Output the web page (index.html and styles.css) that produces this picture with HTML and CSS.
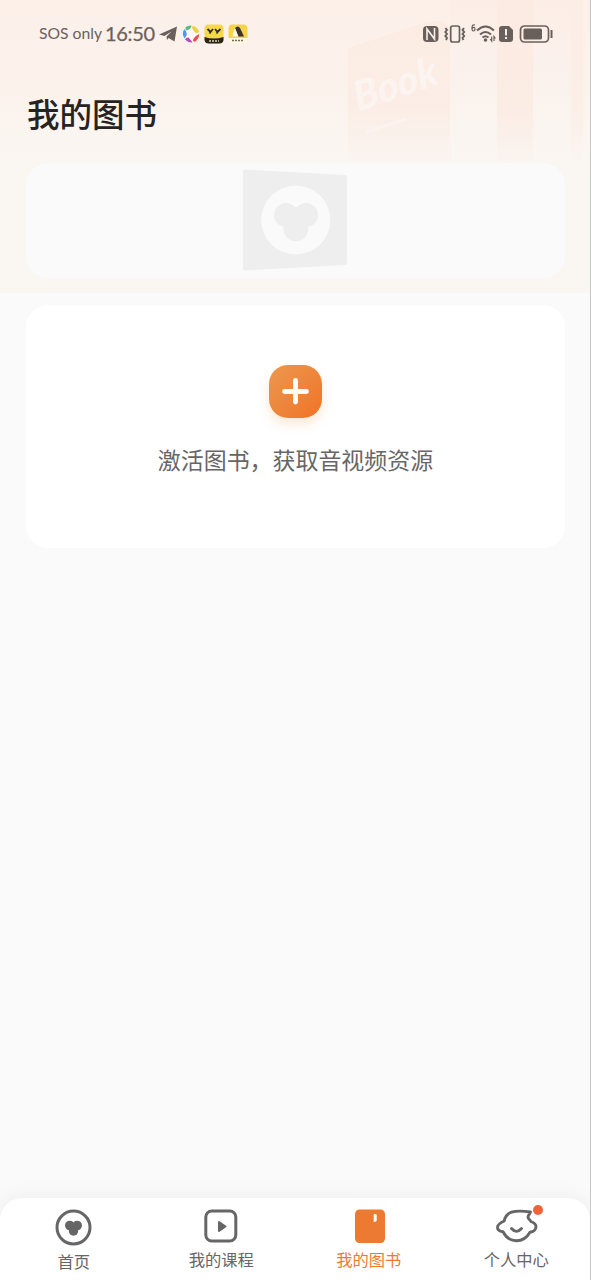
FILE: index.html
```html
<!DOCTYPE html>
<html lang="zh-CN">
<head>
<meta charset="utf-8">
<title>我的图书</title>
<link rel="stylesheet" href="styles.css">
</head>
<body>
<div class="screen">
  <svg class="hero" viewBox="0 0 591 293" aria-hidden="true">
    <defs>
      <linearGradient id="hero-bg" x1="0" y1="0" x2="0" y2="1">
        <stop offset="0" stop-color="#fcf0e9"/><stop offset=".3" stop-color="#fcf2ec"/>
        <stop offset=".55" stop-color="#faf6f2"/><stop offset="1" stop-color="#faf7f3"/>
      </linearGradient>
      <linearGradient id="book-fill" gradientUnits="userSpaceOnUse" x1="0" y1="0" x2="0" y2="162">
        <stop offset="0" stop-color="#fcebe2"/><stop offset=".65" stop-color="#fbece4"/><stop offset="1" stop-color="#faf4f0"/>
      </linearGradient>
      <linearGradient id="page-fill" gradientUnits="userSpaceOnUse" x1="0" y1="0" x2="0" y2="162">
        <stop offset="0" stop-color="#fceee6"/><stop offset=".4" stop-color="#fbf1ec"/><stop offset="1" stop-color="#faf6f2"/>
      </linearGradient>
    </defs>
    <rect width="591" height="293" fill="url(#hero-bg)"/>
    <path d="M348 48L420 24Q450 15 450 32V160H348Z" fill="url(#book-fill)" opacity=".85"/>
    <path d="M450 0H497V160H450Z" fill="url(#page-fill)"/>
    <path d="M497 0H533V160H497Z" fill="url(#book-fill)"/>
    <path d="M533 0H571V160H533Z" fill="url(#page-fill)"/>
    <path d="M571 0H583V160H571Z" fill="url(#book-fill)" opacity=".6"/>
    <path d="M366 132L406 119" stroke="#fcf3ee" stroke-width="3"/>
    <text class="hero-word" transform="translate(358 112) rotate(-19) skewX(-4)" textLength="87" lengthAdjust="spacingAndGlyphs">Book</text>
  </svg>

  <div class="status">
    <span class="carrier">SOS only</span>
    <span class="clock">16:50</span>
    <svg class="telegram" width="19" height="16" viewBox="0 0 19 16"><path d="M0 8.500L18 .500L15.500 15.500L9.500 12L8 14L7.500 10.500L12.500 5.500L5.500 10Z" fill="#69615d"/></svg>
    <svg class="pinwheel" width="18" height="18" viewBox="0 0 18 18"><circle cx="9" cy="9" r="8.500" fill="#fffaf7"/><path d="M3.500 2.200Q6 .2 9.500 .5Q9 4.500 4.500 5.500Q3 4 3.500 2.200Z" fill="#58bd77"/><path d="M10.500 .8Q15.500 2 17.300 7Q15 9 13 7.500L10.200 3.500Q10 2 10.500 .8Z" fill="#f0cf48"/><path d="M17.300 9Q17 14 13 16.700Q10.500 16.500 11 14.500Q13 10.500 17.300 9Z" fill="#e9504f"/><path d="M3 14.500Q4 12.200 6.500 12.500L10.500 17.300Q6 18 3 14.500Z" fill="#b74bc0"/><path d="M2.300 4Q5.200 6.500 4.800 10L2.500 13.500Q-.8 8.500 2.300 4Z" fill="#4d9af0"/></svg>
    <svg class="app" width="20" height="20" viewBox="0 0 20 20"><rect x=".5" y=".5" width="19" height="19" rx="4" fill="#f5d84b"/><path d="M.5 13Q10 16 19.500 13V16Q19 19.500 15 19.500H5Q1 19.500.5 16Z" fill="#29241c"/><path d="M3.500 5L6.500 8L9 5M6.500 8L5.500 9.500M11 5L13.500 8L16.500 5M13.500 8L12.500 9.500" fill="none" stroke="#322b20" stroke-width="1.800"/><path d="M5 17H15" stroke="#ddd3b2" stroke-width="1.500" stroke-dasharray="2 1"/></svg>
    <svg class="app" width="20" height="20" viewBox="0 0 20 20"><rect x=".5" y=".5" width="19" height="19" rx="4" fill="#fff8df"/><path d="M.5 14V4Q1 .5 4 .5H16Q19.500 1 19.500 4V14Z" fill="#f4d34d"/><path d="M7 4Q10 1 12 4L16 12.500H10Z" fill="#38332c"/><path d="M7 4L10.500 12.500H4.500L5.500 8Z" fill="#fffbe9"/><path d="M4 16.500H16" stroke="#6f6960" stroke-width="1.300" stroke-dasharray="2 1"/></svg>
    <svg class="system" width="132" height="22" viewBox="0 0 132 22" fill="none" stroke="#69605b">
      <rect x="1" y="3" width="15.500" height="16" rx="4" fill="#69605b" stroke="none"/>
      <path d="M5 17V6L12.500 16V5" stroke="#fbefe8" stroke-width="1.600"/>
      <path d="M23.500 5L25 7L23.300 9L25 11L23.300 13L25 15L24 17M42 5L40.500 7L42.200 9L40.500 11L42.200 13L40.500 15L41.500 17" stroke-width="1.900"/>
      <rect x="28.700" y="3" width="8.800" height="16" rx="2" stroke-width="1.700"/>
      <path d="M53 2Q50 1 50 5V6Q50 8 51.500 8T53 6T51.500 4.500T50 6" stroke-width="1.200"/>
      <path d="M55 7.500Q63.500 -.500 72 7.500M58 11.500Q63.500 6.500 69 11.500M60.500 14.500Q63.500 12 66.500 14.500" stroke-width="2"/>
      <circle cx="63.500" cy="17" r="1.800" fill="#69605b" stroke="none"/>
      <path d="M69.700 13.500V18L68.300 16M72 18V13.500L73.400 15.500" stroke-width="1.200"/>
      <path d="M80 3H87L91 7V16Q91 19 88 19H80Q77 19 77 16V6Q77 3 80 3Z" fill="#69605b" stroke="none"/>
      <path d="M84 6V12.500M84 14V16" stroke="#fff" stroke-width="1.800"/>
      <rect x="98.500" y="3" width="28" height="16" rx="4" stroke-width="1.700"/>
      <rect x="101.500" y="5.500" width="18.500" height="11" rx="1.500" fill="#69605b" stroke="none"/>
      <path d="M129.500 7V15" stroke-width="2"/>
    </svg>
  </div>

  <main class="content">
    <h1 class="title">我的图书</h1>
    <section class="card banner">
      <svg width="108" height="104" viewBox="0 0 108 104"><path d="M3 .500L103 6Q105 6 105 8V94Q105 96 103 96L3 101.500Q1 101.500 1 99.500V2.500Q1 .500 3 .500Z" fill="#eee"/><circle cx="53.800" cy="51" r="34.500" fill="#fafafa"/><g fill="#eee"><circle cx="44" cy="46" r="12"/><circle cx="64" cy="46" r="12"/><circle cx="53.800" cy="59.800" r="12.500"/><path d="M44 42L53.800 38L63 42V60H44Z"/></g></svg>
    </section>
    <section class="card activate">
      <button class="plus" aria-label="激活图书"><svg width="53" height="53" viewBox="0 0 53 53"><path d="M15.500 26.500H37.500M26.500 15.500V37" stroke="#fff" stroke-width="4.800" stroke-linecap="round"/></svg></button>
      <p class="hint">激活图书，获取音视频资源</p>
    </section>
  </main>

  <nav class="tabs">
    <a class="tab home"><svg width="38" height="38" viewBox="0 0 38 38"><circle cx="18.500" cy="19.500" r="16.500" fill="none" stroke="#666" stroke-width="3"/><g fill="#666"><circle cx="14.800" cy="17.500" r="4.800"/><circle cx="22.200" cy="17.500" r="4.800"/><circle cx="18.500" cy="23" r="4.700"/></g></svg><span>首页</span></a>
    <a class="tab"><svg width="38" height="36" viewBox="0 0 38 36"><rect x="3.800" y="3" width="30" height="30" rx="6" fill="none" stroke="#666" stroke-width="3"/><path d="M17 14V23L23.500 18.500Z" fill="#666" stroke="#666" stroke-width="2" stroke-linejoin="round"/></svg><span>我的课程</span></a>
    <a class="tab active"><svg width="38" height="36" viewBox="0 0 38 36"><rect x="5" y="1.500" width="30" height="33.500" rx="4.500" fill="#ec7b31"/><path d="M23.700 7Q23.700 6 24.700 6H25.700Q26.700 6 26.700 7V12.500Q26.700 13 26.200 13.200L24.300 14Q23.700 14.200 23.700 13.500Z" fill="#fff"/></svg><span>我的图书</span></a>
    <a class="tab"><svg width="44" height="36" viewBox="0 0 44 36"><path d="M36.500 4C30 3 22 2.800 17.500 4.200C13.500 5.500 11 9 10.200 13C7 14.500 3.500 16.500 3.500 19.300C3.500 22 6 23.500 9 23.800C12 29.500 16.500 32.800 22.500 32.800S33 29.500 36 24.300C39.500 23.800 42 21.500 42 18.800S39.500 14.500 36.800 13.500C36.500 11.500 34 11.500 34 9C34 7 36 6 36.500 4Z" fill="none" stroke="#666" stroke-width="2.900" stroke-linejoin="round"/><path d="M17.500 20.500Q22.500 26.300 27.500 20.500" fill="none" stroke="#666" stroke-width="2.900" stroke-linecap="round"/></svg><span>个人中心</span><i class="dot"></i></a>
  </nav>
</div>
</body>
</html>
```
FILE: styles.css
```css
* { box-sizing: border-box; }
body {
  margin: 0;
  background: #fafafa;
  font-family: "Noto Sans CJK SC", sans-serif;
}
.screen {
  position: relative;
  display: flex;
  flex-direction: column;
  height: 1280px;
  overflow: hidden;
  border-right: 1px solid #c5c5c5;
}
.hero {
  position: absolute;
  top: 0;
  left: 0;
  width: 591px;
  height: 293px;
}
.hero-word {
  font: italic 900 41px Lato, sans-serif;
  fill: #fcf4f0;
}
.status {
  position: relative;
  display: flex;
  align-items: center;
  height: 67px;
  padding: 0 36px 0 39px;
  color: #69615d;
}
.carrier {
  width: 63px;
  margin-top: -1px;
  font: 15.7px/20px Lato, sans-serif;
  white-space: nowrap;
}
.clock {
  width: 50px;
  margin: -1px 0 0 3px;
  font: 400 20px/24px Lato, sans-serif;
  letter-spacing: -.3px;
  white-space: nowrap;
  -webkit-text-stroke: .25px #69615d;
}
.telegram { margin-left: 4px; }
.pinwheel { margin-left: 4px; }
.app { margin-left: 4px; }
.system { margin-left: auto; }
.content {
  position: relative;
  flex: 1;
  padding: 22px 25px 0 26px;
}
.title {
  margin: 0 0 26px 1px;
  height: 48px;
  color: #262322;
  font-size: 32.5px;
  font-weight: 500;
  line-height: 48px;
}
.card { border-radius: 22px; }
.banner {
  display: flex;
  justify-content: center;
  height: 115px;
  padding-top: 6px;
  background: #fafafa;
}
.activate {
  display: flex;
  flex-direction: column;
  align-items: center;
  height: 243px;
  margin-top: 27px;
  padding-top: 59.5px;
  background: #fff;
}
.plus {
  width: 53px;
  height: 53px;
  padding: 0;
  border: 0;
  border-radius: 19px;
  background: linear-gradient(135deg, #ed984f, #ed843a 55%, #f27325);
  box-shadow: 0 6px 12px rgba(237, 148, 58, .22);
}
.plus svg { display: block; }
.hint {
  margin: 24.5px 0 0;
  color: #666;
  font-size: 22.95px;
  line-height: 34px;
}
.tabs {
  position: relative;
  display: grid;
  grid-template-columns: repeat(4, 1fr);
  height: 82px;
  padding-top: 10px;
  border-radius: 22px 22px 0 0;
  background: #fff;
  box-shadow: 0 -2px 20px rgba(0, 0, 0, .05);
}
.tab {
  position: relative;
  display: flex;
  flex-direction: column;
  align-items: center;
  gap: 3px;
  color: #666;
  font-size: 16.3px;
  line-height: 24px;
}
.tab svg { flex: none; }
.active { color: #ec7b31; }
.dot {
  position: absolute;
  top: -3.5px;
  left: 90px;
  width: 10px;
  height: 10px;
  border-radius: 50%;
  background: #f0623a;
}
```
